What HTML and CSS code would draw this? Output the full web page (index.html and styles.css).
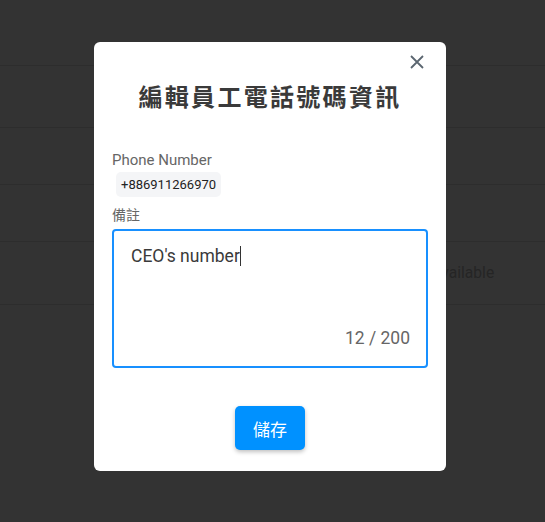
FILE: index.html
```html
<!DOCTYPE html>
<html lang="zh-Hant">
<head>
    <meta charset="UTF-8">
    <meta name="viewport" content="width=device-width, initial-scale=1.0">
    <title>編輯員工電話號碼資訊</title>
    <link rel="stylesheet" href="styles.css">
</head>
<body>
    <!-- Table behind the overlay -->
    <div class="table">
        <div class="row row-1"></div>
        <div class="row row-2"></div>
        <div class="row row-3"></div>
        <div class="row row-4"></div>
        <div class="row row-5"><span class="cell-status">Not available</span></div>
        <div class="row row-6"></div>
    </div>

    <!-- Edit dialog -->
    <div class="modal">
        <button class="close-btn" aria-label="Close">
            <svg width="14" height="14" viewBox="0 0 14 14">
                <path d="M1 1 L13 13 M13 1 L1 13" stroke="#5b6670" stroke-width="1.8" fill="none"/>
            </svg>
        </button>
        <h2 class="modal-title">編輯員工電話號碼資訊</h2>

        <div class="field-label">Phone Number</div>
        <div class="phone-chip">+886911266970</div>

        <div class="field-label note-label">備註</div>
        <div class="note-box">
            <span class="note-text">CEO's number</span><span class="caret"></span>
            <span class="counter">12 / 200</span>
        </div>

        <div class="actions">
            <button class="save-btn">儲存</button>
        </div>
    </div>
</body>
</html>
```

FILE: styles.css
```css
body {
    margin: 0;
    padding: 0;
    background-color: #333333;
    font-family: Roboto, "Noto Sans CJK TC", sans-serif;
    height: 522px;
    overflow: hidden;
}
.table {
    display: flex;
    flex-direction: column;
}
.row {
    border-bottom: 1px solid #2d2d2d;
    box-sizing: border-box;
    display: flex;
    align-items: center;
}
.row-1 { height: 66px; }
.row-2 { height: 62px; }
.row-3 { height: 57px; }
.row-4 { height: 57px; }
.row-5 { height: 63px; }
.row-6 { height: 71px; border-bottom: none; }
.cell-status {
    margin-left: 404px;
    font-size: 15.6px;
    color: #252525;
}
.modal {
    position: absolute;
    top: 42px;
    left: 94px;
    width: 352px;
    box-sizing: border-box;
    padding: 0 18px 21px;
    background-color: white;
    border-radius: 6px;
}
.close-btn {
    position: absolute;
    top: 12px;
    right: 21px;
    width: 16px;
    height: 16px;
    padding: 1px;
    border: none;
    background: none;
    cursor: pointer;
}
.modal-title {
    margin: 38px 0 38px;
    text-align: center;
    font-family: "Noto Sans CJK TC", sans-serif;
    font-size: 24px;
    line-height: 32px;
    font-weight: 700;
    letter-spacing: 2.3px;
    color: #3a3a3a;
}
.field-label {
    font-size: 15px;
    line-height: 20px;
    color: #666;
}
.note-label {
    font-family: "Noto Sans CJK TC", sans-serif;
    font-size: 14px;
}
.phone-chip {
    display: inline-block;
    margin: 2px 0 7px 4px;
    padding: 0 5px;
    height: 25px;
    line-height: 25px;
    border-radius: 5px;
    background-color: #f4f5f7;
    font-size: 13px;
    color: #222;
}
.note-box {
    position: relative;
    margin-top: 5px;
    height: 139px;
    box-sizing: border-box;
    padding: 13px 17px;
    border: 2px solid #1890ff;
    border-radius: 4px;
    font-size: 17.5px;
    line-height: 24px;
    color: #3a3a3a;
}
.caret {
    display: inline-block;
    width: 1px;
    height: 20px;
    vertical-align: -4px;
    background-color: #333;
}
.counter {
    position: absolute;
    right: 16px;
    bottom: 16px;
    font-size: 17.5px;
    line-height: 24px;
    color: #666;
}
.actions {
    display: flex;
    justify-content: center;
    margin-top: 38px;
}
.save-btn {
    width: 70px;
    height: 44px;
    border: none;
    border-radius: 5px;
    background-color: #0091ff;
    color: white;
    font-family: "Noto Sans CJK TC", sans-serif;
    font-size: 17px;
    box-shadow: 0 2px 4px rgba(0,0,0,0.25);
    cursor: pointer;
}
```
